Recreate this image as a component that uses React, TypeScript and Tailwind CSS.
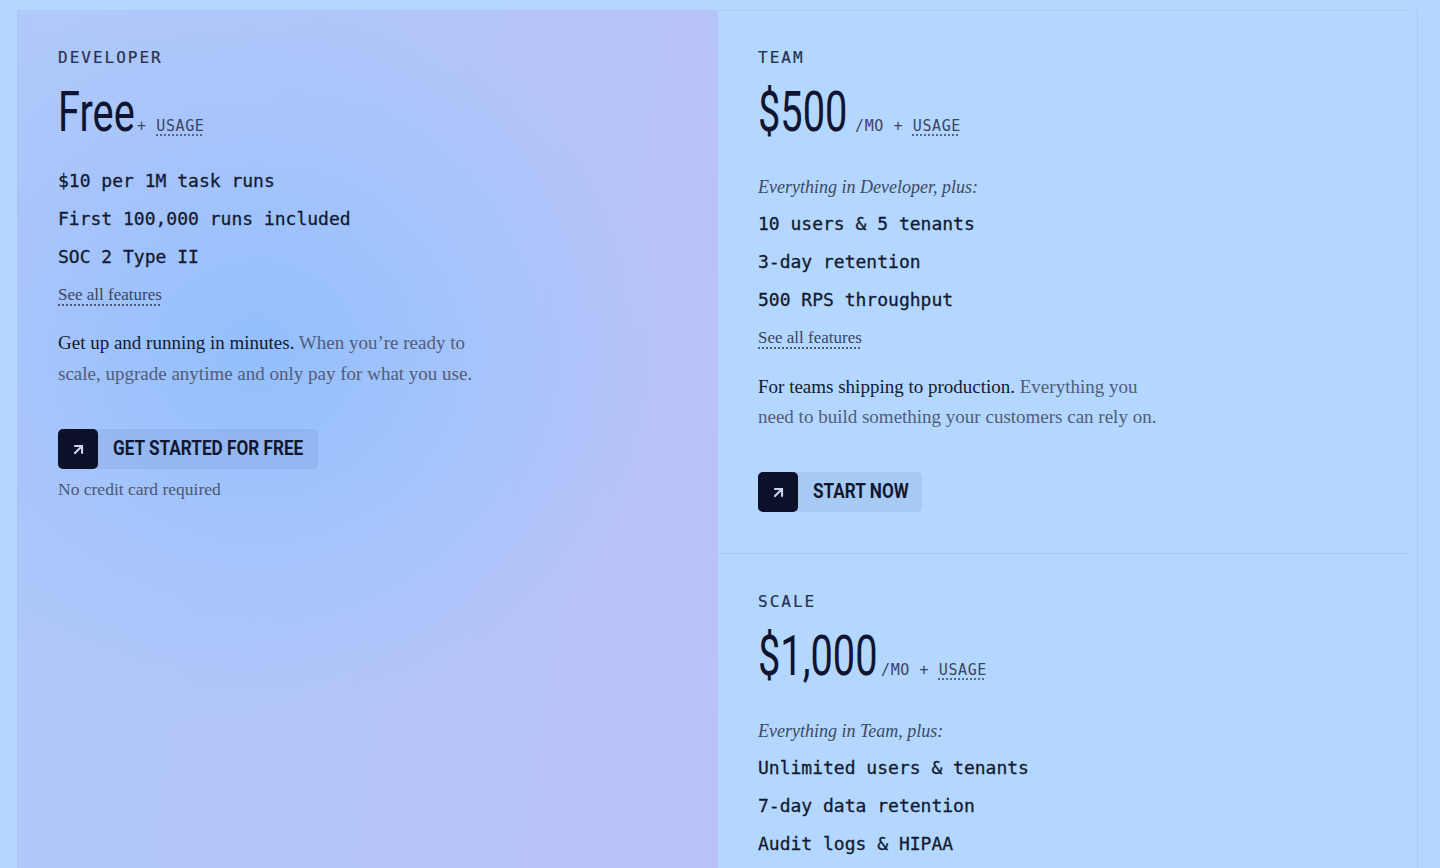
import { ArrowUpRight } from 'lucide-react'

const mono = "font-['DejaVu_Sans_Mono','Liberation_Mono',monospace]"
const serif = "font-['Liberation_Serif','DejaVu_Serif',serif]"
const sans = "font-['Roboto','Liberation_Sans',sans-serif]"

const Label = ({ children }: { children: string }) => (
  <p className={`${mono} text-[16px] leading-5 tracking-[2px] text-[#27324e] [-webkit-text-stroke:0.2px_#27324e]`}>
    {children}
  </p>
)

// Roboto squeezed sideways stands in for the condensed display face; the
// wrapper keeps the squeezed width in the flow.
const Price = ({ amount, width, monthly }: { amount: string; width: string; monthly?: boolean }) => (
  <div className="mt-4 flex items-baseline">
    <span className={`inline-block ${width}`}>
      <span className={`${sans} inline-block origin-left scale-x-[0.71] text-[56px] leading-[56px] text-[#0f1530]`}>
        {amount}
      </span>
    </span>
    <span className={`${mono} ml-[6px] text-[15px] tracking-[0.6px] text-[#3b4562]`}>
      {monthly ? '/MO + ' : '+ '}
      <span className="underline decoration-dotted decoration-[#3b4562] underline-offset-4">USAGE</span>
    </span>
  </div>
)

const Features = ({ items }: { items: string[] }) => (
  <ul className={`${mono} text-[18px] leading-[38px] text-[#121a33] [-webkit-text-stroke:0.3px_#121a33]`}>
    {items.map((item) => (
      <li key={item}>{item}</li>
    ))}
  </ul>
)

const SeeAll = () => (
  <a className={`${serif} block text-[17px] leading-[38px] text-[#3a4463]`}>
    <span className="underline decoration-dotted underline-offset-[5px]">See all features</span>
  </a>
)

const CtaButton = ({ label, width }: { label: string; width: string }) => (
  <button className="flex h-10 items-center rounded-[5px] bg-[#3c5796]/10">
    <span className="flex h-10 w-10 items-center justify-center rounded-[5px] bg-[#0c1129]">
      <ArrowUpRight size={17} strokeWidth={3} className="text-[#c9d5f2]" />
    </span>
    <span className={`ml-[15px] mr-4 inline-block text-left ${width}`}>
      <span className={`${sans} inline-block origin-left scale-x-[0.88] whitespace-nowrap text-[19.5px] font-bold text-[#121730]`}>
        {label}
      </span>
    </span>
  </button>
)

export default function App() {
  return (
    <div className="flex h-[868px] w-[1440px] overflow-hidden bg-[#b3d7fe] pl-[17px] pt-[10px]">
      {/* developer plan card */}
      <section className="h-full w-[701px] shrink-0 border-l border-[#a9c4f4] bg-[radial-gradient(ellipse_480px_440px_at_34%_40%,#93bffc_0%,#a5c4fb_45%,rgba(180,196,250,0)_85%),linear-gradient(100deg,#b0c9fb_0%,#b3c6fa_45%,#bac1f8_100%)] pl-10 pt-[38px]">
        <Label>DEVELOPER</Label>
        <Price amount="Free" width="w-[73px]" />
        <div className="mt-[22px]">
          <Features items={['$10 per 1M task runs', 'First 100,000 runs included', 'SOC 2 Type II']} />
          <SeeAll />
        </div>
        <p className={`${serif} mt-[13px] w-[415px] text-[19px] leading-[31px] text-[#525c7a]`}>
          <span className="text-[#111a33]">Get up and running in minutes.</span> When you’re ready to scale,
          upgrade anytime and only pay for what you use.
        </p>
        <div className="mt-10">
          <CtaButton label="GET STARTED FOR FREE" width="w-[189px]" />
        </div>
        <p className={`${serif} mt-[10px] text-[17.5px] leading-5 text-[#4c5674]`}>No credit card required</p>
      </section>

      {/* paid plans column */}
      <div className="h-full w-[700px] shrink-0 border-r border-[#a5c9f1]">
        <div className="w-[690px] border-t border-[#a9cdf5]">
          <section className="border-b border-[#a5c8f0] pb-[41px] pl-10 pt-[37px]">
            <Label>TEAM</Label>
            <Price amount="$500" width="w-[91px]" monthly />
            <div className="mt-[29px]">
              <p className={`${serif} text-[18px] italic leading-[36px] text-[#3f4966]`}>Everything in Developer, plus:</p>
              <Features items={['10 users & 5 tenants', '3-day retention', '500 RPS throughput']} />
              <SeeAll />
            </div>
            <p className={`${serif} mt-[15px] w-[415px] text-[19px] leading-[30px] text-[#525c7a]`}>
              <span className="text-[#111a33]">For teams shipping to production.</span> Everything you need to build
              something your customers can rely on.
            </p>
            <div className="mt-10">
              <CtaButton label="START NOW" width="w-[93px]" />
            </div>
          </section>

          <section className="pl-10 pt-[38px]">
            <Label>SCALE</Label>
            <Price amount="$1,000" width="w-[117px]" monthly />
            <div className="mt-[29px]">
              <p className={`${serif} text-[18px] italic leading-[36px] text-[#3f4966]`}>Everything in Team, plus:</p>
              <Features items={['Unlimited users & tenants', '7-day data retention', 'Audit logs & HIPAA']} />
            </div>
          </section>
        </div>
      </div>
    </div>
  )
}
